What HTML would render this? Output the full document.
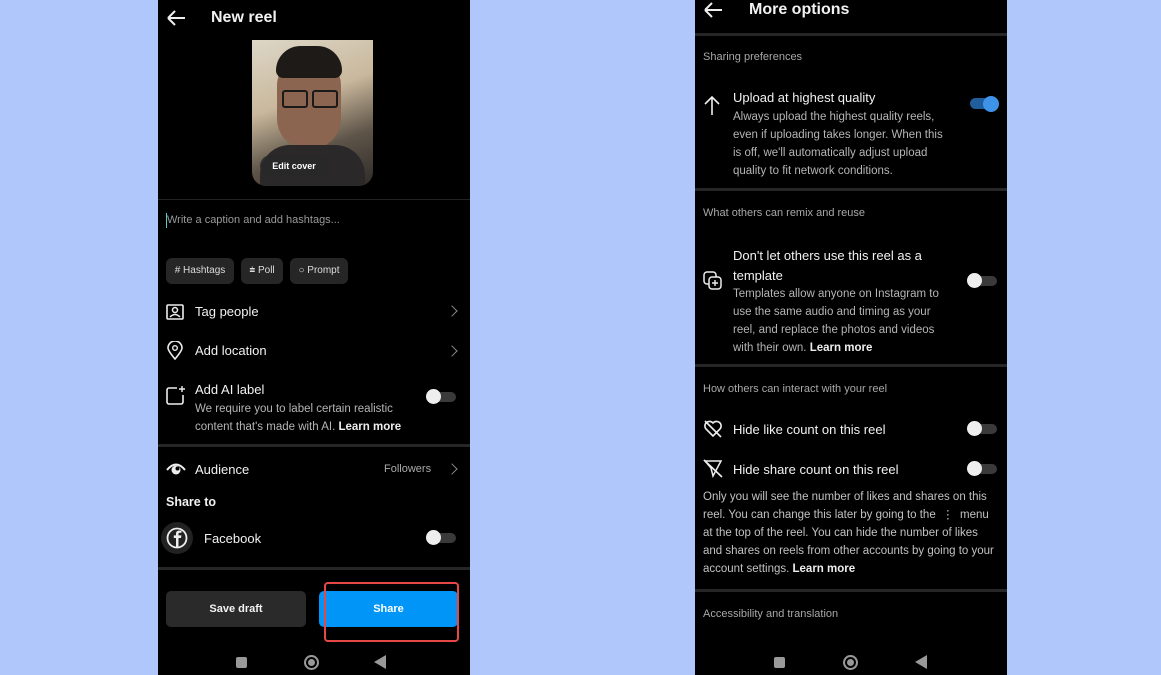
<!DOCTYPE html>
<html><head><meta charset="utf-8"><style>
body{margin:0;width:1161px;height:675px;background:#afc7fa;position:relative;overflow:hidden;font-family:"Liberation Sans",sans-serif;color:#f2f2f2}
.ph{position:absolute;top:0;height:675px;background:#000}
.a{position:absolute;white-space:nowrap}
.t{font-size:13px}
.s{font-size:11.5px;color:#b5b5b5;line-height:18px}
.h{font-size:11px;color:#a8a8a8}
.div{position:absolute;left:0;right:0;height:3px;background:#262626}
.tg{position:absolute;width:30px;height:13px}
.tg .tr{position:absolute;left:4px;top:2px;width:26px;height:10px;border-radius:5px;background:#3a3a3a}
.tg .k{position:absolute;left:0;top:-1px;width:15px;height:15px;border-radius:50%;background:#eee}
.chip{position:absolute;top:258px;height:26px;border-radius:6px;background:#262626;font-size:10px;line-height:26px;color:#ddd;text-align:center}
.chev{position:absolute;width:7px;height:7px;border-right:1.5px solid #888;border-top:1.5px solid #888;transform:rotate(45deg)}
</style></head><body>
<div class="ph" style="left:158px;width:312px">
 <svg class="a" style="left:8px;top:10px" width="20" height="16"><path d="M2 8H19M2 8L9 1M2 8L9 15" stroke="#eee" stroke-width="2" fill="none"/></svg>
 <div class="a" style="left:53px;top:9px;font-size:16px;font-weight:bold">New reel</div>
 <div class="a" style="left:94px;top:40px;width:121px;height:146px;border-radius:0 0 14px 14px;overflow:hidden;background:linear-gradient(160deg,#ddd7c8 0%,#c9b89c 40%,#5e5448 70%,#2f2b29 100%)">
  <div class="a" style="left:25px;top:14px;width:64px;height:95px;border-radius:36px 36px 34px 34px;background:#8c6550"></div>
  <div class="a" style="left:24px;top:6px;width:66px;height:32px;border-radius:33px 33px 10px 10px;background:#1e1a18"></div>
  <div class="a" style="left:30px;top:50px;width:22px;height:14px;border:2.5px solid #1a1a1a;border-radius:3px"></div>
  <div class="a" style="left:60px;top:50px;width:22px;height:14px;border:2.5px solid #1a1a1a;border-radius:3px"></div>
  <div class="a" style="left:8px;top:105px;width:105px;height:45px;border-radius:30px 30px 0 0;background:#2a2828"></div>
  <div class="a" style="left:8px;top:115px;width:68px;height:22px;border-radius:11px;background:rgba(40,40,40,.85);font-size:9px;line-height:22px;text-align:center;color:#fff;font-weight:bold">Edit cover</div>
 </div>
 <div class="a" style="left:0;right:0;top:199px;height:1px;background:#222"></div>
 <div class="a" style="left:8px;top:213px;width:1px;height:15px;background:#5cc"></div>
 <div class="a" style="left:9px;top:214px;font-size:11px;color:#999">Write a caption and add hashtags...</div>
 <div class="chip" style="left:8px;width:68px"># Hashtags</div>
 <div class="chip" style="left:83px;width:42px">⩧ Poll</div>
 <div class="chip" style="left:132px;width:58px">○ Prompt</div>
 <svg class="a" style="left:8px;top:302px" width="18" height="18"><rect x="1" y="3" width="16" height="14" rx="1" stroke="#eee" stroke-width="1.6" fill="none"/><circle cx="9" cy="8" r="2.5" stroke="#eee" stroke-width="1.5" fill="none"/><path d="M4 15Q9 10 14 15" stroke="#eee" stroke-width="1.5" fill="none"/></svg>
 <div class="a t" style="left:37px;top:304px">Tag people</div><div class="chev" style="left:290px;top:307px"></div>
 <svg class="a" style="left:9px;top:341px" width="16" height="19"><path d="M8 18C3 12 1 9 1 7A7 7 0 0 1 15 7C15 9 13 12 8 18Z" stroke="#eee" stroke-width="1.6" fill="none"/><circle cx="8" cy="7" r="2.3" stroke="#eee" stroke-width="1.4" fill="none"/></svg>
 <div class="a t" style="left:37px;top:343px">Add location</div><div class="chev" style="left:290px;top:347px"></div>
 <svg class="a" style="left:8px;top:385px" width="20" height="20"><path d="M11 3H3A2 2 0 0 0 1 5V17A2 2 0 0 0 3 19H15A2 2 0 0 0 17 17V10" stroke="#eee" stroke-width="1.6" fill="none"/><path d="M16 1V7M13 4H19" stroke="#eee" stroke-width="1.4"/></svg>
 <div class="a t" style="left:37px;top:382px">Add AI label</div>
 <div class="a s" style="left:37px;top:400px">We require you to label certain realistic<br>content that's made with AI. <b style="color:#eee">Learn more</b></div>
 <div class="tg" style="left:268px;top:390px"><div class="tr"></div><div class="k"></div></div>
 <div class="div" style="top:444px"></div>
 <svg class="a" style="left:8px;top:462px" width="20" height="14"><path d="M1 8Q10 -3 19 8" stroke="#eee" stroke-width="2" fill="none"/><circle cx="10" cy="8" r="4.5" fill="#eee"/><circle cx="11.5" cy="6.5" r="2" fill="#000"/></svg>
 <div class="a t" style="left:37px;top:462px">Audience</div>
 <div class="a" style="left:226px;top:463px;font-size:11px;color:#aaa">Followers</div><div class="chev" style="left:290px;top:465px"></div>
 <div class="a t" style="left:8px;top:495px;font-weight:bold;font-size:12.5px">Share to</div>
 <div class="a" style="left:3px;top:522px;width:32px;height:32px;border-radius:50%;background:#222"></div>
 <svg class="a" style="left:8px;top:527px" width="22" height="22"><circle cx="11" cy="11" r="9.5" stroke="#eee" stroke-width="1.8" fill="none"/><path d="M12.5 20.5V11H15L15.4 8.4H12.5V7C12.5 6.2 12.8 5.8 13.8 5.8H15.5V3.6H13.3C10.9 3.6 10 4.9 10 7V8.4H7.8V11H10V20.5" fill="#eee"/></svg>
 <div class="a t" style="left:46px;top:531px">Facebook</div>
 <div class="tg" style="left:268px;top:531px"><div class="tr"></div><div class="k"></div></div>
 <div class="div" style="top:567px"></div>
 <div class="a" style="left:8px;top:591px;width:140px;height:36px;border-radius:5px;background:#2a2a2a;font-size:11px;font-weight:bold;line-height:36px;text-align:center">Save draft</div>
 <div class="a" style="left:161px;top:591px;width:139px;height:36px;border-radius:5px;background:#0095f6;font-size:11px;font-weight:bold;line-height:36px;text-align:center;color:#fff">Share</div>
 <div class="a" style="left:166px;top:582px;width:131px;height:56px;border:2.5px solid #e64848;border-radius:4px"></div>
 <div class="a" style="left:78px;top:657px;width:11px;height:11px;border-radius:2px;background:#999"></div>
 <div class="a" style="left:146px;top:655px;width:11px;height:11px;border-radius:50%;border:2px solid #999;box-shadow:inset 0 0 0 2px #000,inset 0 0 0 6px #999"></div>
 <svg class="a" style="left:216px;top:655px" width="12" height="14"><path d="M12 0V14L0 7Z" fill="#999"/></svg>
</div>

<div class="ph" style="left:695px;width:312px">
 <svg class="a" style="left:8px;top:2px" width="20" height="16"><path d="M2 8H19M2 8L9 1M2 8L9 15" stroke="#eee" stroke-width="2" fill="none"/></svg>
 <div class="a" style="left:54px;top:1px;font-size:16px;font-weight:bold">More options</div>
 <div class="div" style="top:33px"></div>
 <div class="a h" style="left:8px;top:51px">Sharing preferences</div>
 <svg class="a" style="left:9px;top:95px" width="16" height="20"><path d="M8 20V2M1 9L8 2L15 9" stroke="#eee" stroke-width="1.6" fill="none"/></svg>
 <div class="a t" style="left:38px;top:90px">Upload at highest quality</div>
 <div class="a s" style="left:38px;top:108px">Always upload the highest quality reels,<br>even if uploading takes longer. When this<br>is off, we'll automatically adjust upload<br>quality to fit network conditions.</div>
 <div class="a" style="left:275px;top:98px;width:28px;height:11px;border-radius:6px;background:#1f5e9a"></div>
 <div class="a" style="left:288px;top:96px;width:16px;height:16px;border-radius:50%;background:#3e92e8"></div>
 <div class="div" style="top:188px"></div>
 <div class="a h" style="left:8px;top:207px">What others can remix and reuse</div>
 <div class="a t" style="left:38px;top:246px;line-height:20px">Don't let others use this reel as a<br>template</div>
 <svg class="a" style="left:8px;top:271px" width="20" height="20"><rect x="1" y="1" width="12" height="12" rx="3" stroke="#eee" stroke-width="1.5" fill="none"/><rect x="6" y="6" width="12" height="12" rx="3" stroke="#eee" stroke-width="1.5" fill="#000"/><path d="M12 9V15M9 12H15" stroke="#eee" stroke-width="1.4"/></svg>
 <div class="a s" style="left:38px;top:285px">Templates allow anyone on Instagram to<br>use the same audio and timing as your<br>reel, and replace the photos and videos<br>with their own. <b style="color:#eee">Learn more</b></div>
 <div class="tg" style="left:272px;top:274px"><div class="tr"></div><div class="k"></div></div>
 <div class="div" style="top:364px"></div>
 <div class="a h" style="left:8px;top:383px">How others can interact with your reel</div>
 <svg class="a" style="left:8px;top:419px" width="20" height="19"><path d="M10 17L3 10A4.5 4.5 0 0 1 10 4A4.5 4.5 0 0 1 17 10Z" stroke="#eee" stroke-width="1.6" fill="none"/><path d="M2 2L18 18" stroke="#eee" stroke-width="1.6"/></svg>
 <div class="a t" style="left:38px;top:422px">Hide like count on this reel</div>
 <div class="tg" style="left:272px;top:422px"><div class="tr"></div><div class="k"></div></div>
 <svg class="a" style="left:8px;top:459px" width="20" height="19"><path d="M2 2H18L10 17L8 9Z" stroke="#eee" stroke-width="1.5" fill="none"/><path d="M1 1L19 18" stroke="#eee" stroke-width="1.6"/></svg>
 <div class="a t" style="left:38px;top:462px">Hide share count on this reel</div>
 <div class="tg" style="left:272px;top:462px"><div class="tr"></div><div class="k"></div></div>
 <div class="a s" style="left:8px;top:488px;color:#c2c2c2">Only you will see the number of likes and shares on this<br>reel. You can change this later by going to the &nbsp;⋮&nbsp; menu<br>at the top of the reel. You can hide the number of likes<br>and shares on reels from other accounts by going to your<br>account settings. <b style="color:#eee">Learn more</b></div>
 <div class="div" style="top:589px"></div>
 <div class="a h" style="left:8px;top:608px">Accessibility and translation</div>
 <div class="a" style="left:79px;top:657px;width:11px;height:11px;border-radius:2px;background:#999"></div>
 <div class="a" style="left:148px;top:655px;width:11px;height:11px;border-radius:50%;border:2px solid #999;box-shadow:inset 0 0 0 2px #000,inset 0 0 0 6px #999"></div>
 <svg class="a" style="left:220px;top:655px" width="12" height="14"><path d="M12 0V14L0 7Z" fill="#999"/></svg>
</div>
</body></html>
